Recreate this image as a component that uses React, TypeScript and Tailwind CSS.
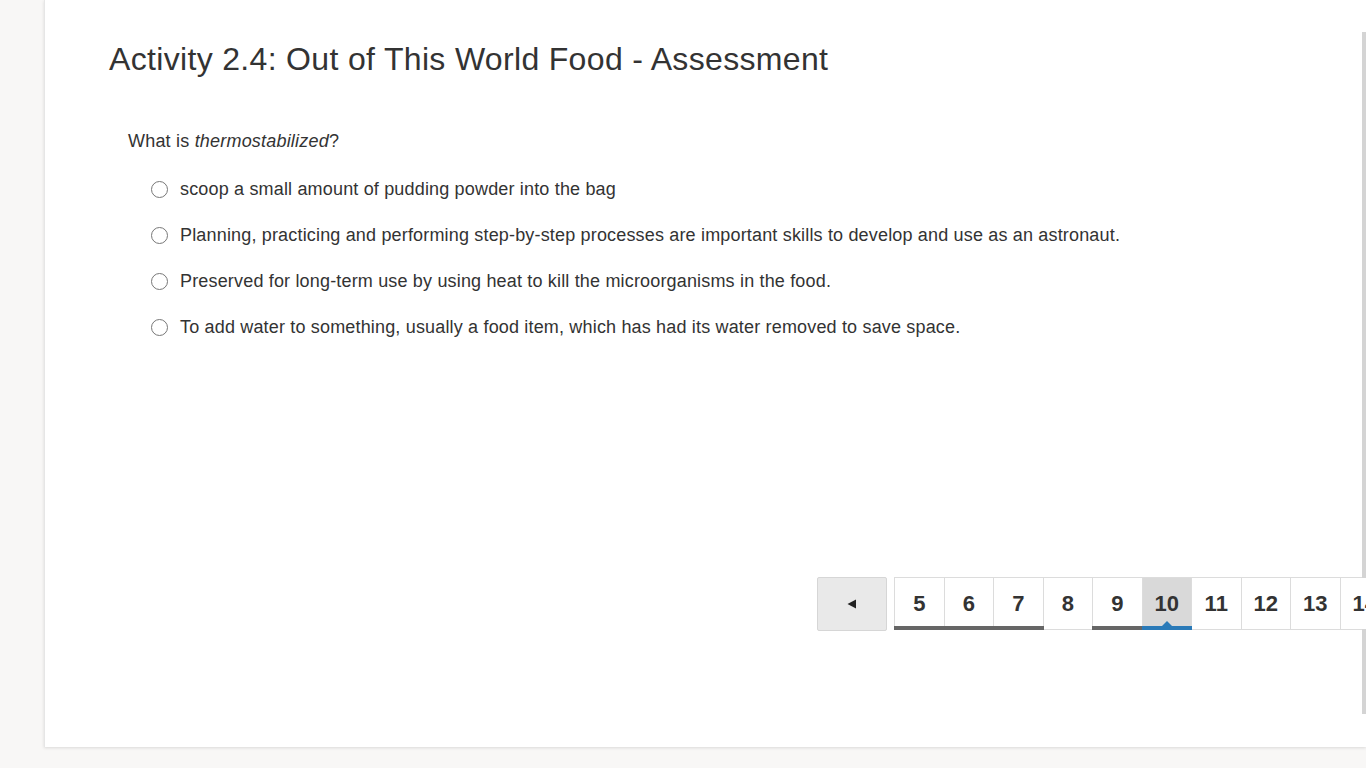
import React from "react"

const options = [
  "scoop a small amount of pudding powder into the bag",
  "Planning, practicing and performing step-by-step processes are important skills to develop and use as an astronaut.",
  "Preserved for long-term use by using heat to kill the microorganisms in the food.",
  "To add water to something, usually a food item, which has had its water removed to save space.",
]

const pages = [
  { n: "5", bar: "gray" },
  { n: "6", bar: "gray" },
  { n: "7", bar: "gray" },
  { n: "8", bar: "none" },
  { n: "9", bar: "gray" },
  { n: "10", bar: "blue" },
  { n: "11", bar: "none" },
  { n: "12", bar: "none" },
  { n: "13", bar: "none" },
  { n: "14", bar: "none" },
]

const App = () => {
  return (
    <div className="h-[768px] w-[1366px] overflow-hidden bg-[#f8f7f6] pl-[44px]" style={{ fontFamily: '"Liberation Sans", Arial, sans-serif' }}>
      <div className="relative h-[747px] overflow-hidden border-l border-[#e6e6e6] bg-white shadow-[0_1px_3px_rgba(0,0,0,0.12)]">
        <div className="absolute right-0 top-[32px] h-[682px] w-[4px] bg-[#d4d4d4]" />

        <h1 className="pl-[64px] pt-[38px] text-[32px] leading-[42px] tracking-[0.33px] text-[#333]">
          Activity 2.4: Out of This World Food - Assessment
        </h1>

        <p className="mt-[49px] pl-[83px] text-[18px] leading-[24px] tracking-[0.2px] text-[#333]">
          What is <em>thermostabilized</em>?
        </p>

        <div className="mt-[24px] flex flex-col gap-[22px] pl-[106px]">
          {options.map((text, i) => (
            <label key={i} className="flex h-[24px] items-center gap-[12px] text-[18px] leading-[24px] tracking-[0.17px] text-[#333]">
              <span className="h-[17px] w-[17px] shrink-0 rounded-full border border-[#777] bg-white" />
              <span className="whitespace-nowrap">{text}</span>
            </label>
          ))}
        </div>

        <div className="ml-[772px] mt-[238px] flex items-start">
          <button className="flex h-[54px] w-[70px] shrink-0 items-center justify-center rounded-[2px] border border-[#d6d6d6] bg-[#e9e9e9]">
            <svg width="10" height="10" viewBox="0 0 10 10">
              <path d="M0.5 5 L9 0.5 L9 9.5 Z" fill="#222" />
            </svg>
          </button>
          <div className="ml-[7px] flex shrink-0 border-y border-l border-[#dcdcdc]">
            {pages.map((p) => (
              <div
                key={p.n}
                className={`relative flex h-[51px] w-[49.5px] shrink-0 items-center justify-center border-r border-[#dcdcdc] text-[22px] font-bold text-[#333] ${p.bar === "blue" ? "bg-[#d9d9d9]" : "bg-white"}`}
              >
                {p.n}
                {p.bar === "gray" && <span className="absolute -bottom-[1px] -left-[1px] -right-[1px] h-[4px] bg-[#666]" />}
                {p.bar === "blue" && (
                  <>
                    <span className="absolute -bottom-[1px] -left-[1px] -right-[1px] h-[4px] bg-[#2a7ab8]" />
                    <span className="absolute bottom-[3px] left-1/2 h-0 w-0 -translate-x-1/2 border-x-[5px] border-b-[5px] border-x-transparent border-b-[#2a7ab8]" />
                  </>
                )}
              </div>
            ))}
          </div>
        </div>
      </div>
    </div>
  )
}

export default App
